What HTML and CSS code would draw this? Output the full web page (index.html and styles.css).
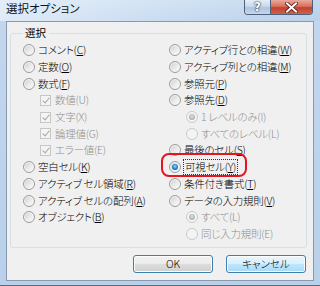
FILE: index.html
```html
<!DOCTYPE html>
<html lang="ja">
<head>
<meta charset="utf-8">
<link rel="stylesheet" href="styles.css">
</head>
<body>
<div class="window">
  <div class="titlebar">
    <span class="title">選択オプション</span>
    <div class="caption-btns">
      <span class="cbtn help">?</span>
      <span class="cbtn close">
        <svg width="13" height="11" viewBox="0 0 13 11"><path d="M2 1.5 L11 9.5 M11 1.5 L2 9.5" stroke="#5a1a14" stroke-width="3.6" stroke-linecap="square"/><path d="M2 1.5 L11 9.5 M11 1.5 L2 9.5" stroke="#ffffff" stroke-width="2" stroke-linecap="square"/></svg>
      </span>
    </div>
  </div>
  <div class="client">
    <fieldset class="group">
      <legend>選択</legend>
      <div class="cols">
        <div class="col">
          <div class="row"><span class="radio"></span><span class="lbl">コメント(<u>C</u>)</span></div>
          <div class="row"><span class="radio"></span><span class="lbl">定数(<u>O</u>)</span></div>
          <div class="row"><span class="radio"></span><span class="lbl">数式(<u>F</u>)</span></div>
          <div class="row sub dis"><span class="check"></span><span class="lbl">数値(U)</span></div>
          <div class="row sub dis"><span class="check"></span><span class="lbl">文字(X)</span></div>
          <div class="row sub dis"><span class="check"></span><span class="lbl">論理値(G)</span></div>
          <div class="row sub dis"><span class="check"></span><span class="lbl">エラー値(E)</span></div>
          <div class="row"><span class="radio"></span><span class="lbl">空白セル(<u>K</u>)</span></div>
          <div class="row"><span class="radio"></span><span class="lbl">アクティブ セル領域(<u>R</u>)</span></div>
          <div class="row"><span class="radio"></span><span class="lbl">アクティブ セルの配列(<u>A</u>)</span></div>
          <div class="row"><span class="radio"></span><span class="lbl">オブジェクト(<u>B</u>)</span></div>
        </div>
        <div class="col">
          <div class="row"><span class="radio"></span><span class="lbl">アクティブ行との相違(<u>W</u>)</span></div>
          <div class="row"><span class="radio"></span><span class="lbl">アクティブ列との相違(<u>M</u>)</span></div>
          <div class="row"><span class="radio"></span><span class="lbl">参照元(<u>P</u>)</span></div>
          <div class="row"><span class="radio"></span><span class="lbl">参照先(<u>D</u>)</span></div>
          <div class="row sub dis"><span class="radio on"></span><span class="lbl">1 レベルのみ(I)</span></div>
          <div class="row sub dis"><span class="radio"></span><span class="lbl">すべてのレベル(L)</span></div>
          <div class="row"><span class="radio"></span><span class="lbl">最後のセル(<u>S</u>)</span></div>
          <div class="row picked"><span class="radio on"></span><span class="lbl focus">可視セル(<u>Y</u>)</span><span class="mark"></span></div>
          <div class="row"><span class="radio"></span><span class="lbl">条件付き書式(<u>T</u>)</span></div>
          <div class="row"><span class="radio"></span><span class="lbl">データの入力規則(<u>V</u>)</span></div>
          <div class="row sub dis"><span class="radio on"></span><span class="lbl">すべて(L)</span></div>
          <div class="row sub dis"><span class="radio"></span><span class="lbl">同じ入力規則(E)</span></div>
        </div>
      </div>
    </fieldset>
    <div class="buttons">
      <button class="btn ok">OK</button>
      <button class="btn cancel">キャンセル</button>
    </div>
  </div>
</div>
</body>
</html>
```

FILE: styles.css
```css
* { box-sizing: border-box; }
html, body { margin: 0; padding: 0; background: #bcd3ec; }
body {
  font-family: "Noto Sans CJK JP", "Noto Sans", sans-serif;
  font-feature-settings: "palt";
  font-weight: 300;
  color: #000;
}
.window {
  width: 320px;
  height: 286px;
  background: linear-gradient(180deg, #d3e3f4 0px, #c2d7ee 21px, #b9d0ea 100%);
  border-bottom: 1px solid #5b6b80;
  overflow: hidden;
}
.titlebar {
  height: 21px;
  display: flex;
  align-items: flex-start;
  padding-left: 6px;
  background: linear-gradient(90deg, rgba(235,243,251,0.7) 0px, rgba(215,230,246,0.3) 160px, rgba(170,196,226,0.35) 320px);
}
.title {
  font-size: 11.5px;
  line-height: 17px;
  color: #111;
  font-weight: 400;
}
.caption-btns {
  margin-left: auto;
  margin-right: 7px;
  display: flex;
  height: 15px;
  border: 1px solid #4f6079;
  border-top: none;
  border-radius: 0 0 4px 4px;
  overflow: hidden;
}
.cbtn {
  height: 14px;
  display: flex;
  align-items: center;
  justify-content: center;
}
.help {
  width: 26px;
  background: linear-gradient(180deg, #e6eef8 0%, #c9d9ec 45%, #aec5df 55%, #c4d8ee 100%);
  border-right: 1px solid #4f6079;
  color: #fff;
  font-family: "DejaVu Sans", sans-serif;
  font-weight: bold;
  font-size: 12px;
  text-shadow: 0 0 2px #223, 0 0 1px #223;
}
.close {
  width: 41px;
  background: linear-gradient(180deg, #e9a99c 0%, #d7715f 45%, #c2412c 55%, #d2614b 100%);
}
.client {
  margin-left: 6px;
  width: 308px;
  height: 260px;
  background: #f0f0f0;
  border: 1px solid #8a99ab;
  padding: 4px 6px 0 3px;
}
.group {
  margin: 0;
  border: 1px solid #d5dfe5;
  border-radius: 3px;
  padding: 2px 0 4px 12px;
  height: 222px;
}
.group legend {
  font-size: 10.5px;
  line-height: 14px;
  padding: 0 3px 0 2px;
  margin-left: 0;
  font-weight: 400;
}
.cols {
  display: grid;
  grid-template-columns: 146px 1fr;
}
.col {
  display: flex;
  flex-direction: column;
}
.row {
  height: 16.7px;
  display: flex;
  align-items: center;
  gap: 3px;
  font-size: 10.5px;
  letter-spacing: -0.25px;
  line-height: 14px;
  white-space: nowrap;
  position: relative;
}
.row.sub { margin-left: 17px; }
.row.dis { color: #8e8e8e; }
.row u { text-underline-offset: 1px; }
.radio {
  width: 12px;
  height: 12px;
  flex: none;
  border-radius: 50%;
  border: 1px solid #9c9c9c;
  background: linear-gradient(135deg, #cbcbcb 0%, #e9e9e9 50%, #fdfdfd 100%);
  box-shadow: inset 0 0 0 1px #f6f6f6;
  position: relative;
}
.radio.on::after {
  content: "";
  position: absolute;
  left: 2px;
  top: 2px;
  width: 6px;
  height: 6px;
  border-radius: 50%;
  background: radial-gradient(circle at 50% 40%, #8fdcff 0%, #2a8fd6 45%, #0b3f7c 100%);
}
.dis .radio {
  border-color: #c9c9c9;
  background: #f4f4f4;
  box-shadow: none;
}
.dis .radio.on::after {
  background: radial-gradient(circle at 50% 40%, #e0e0e0 0%, #b4b4b4 60%, #9a9a9a 100%);
}
.check {
  width: 11px;
  height: 11px;
  flex: none;
  margin-right: 1px;
  border: 1px solid #c6c6c6;
  background: #f4f4f4;
  position: relative;
}
.check::after {
  content: "";
  position: absolute;
  left: 3px;
  top: 0px;
  width: 3px;
  height: 6px;
  border-right: 1.5px solid #a6a6a6;
  border-bottom: 1.5px solid #a6a6a6;
  transform: rotate(40deg);
}
.focus {
  outline: 1px dotted #333;
  outline-offset: 0px;
  padding: 0 1px;
}
.mark {
  position: absolute;
  left: -8px;
  top: -6px;
  width: 86px;
  height: 24px;
  border: 2px solid #e4151f;
  border-radius: 8px;
}
.buttons {
  display: flex;
  justify-content: flex-end;
  gap: 13px;
  margin-top: 7px;
  padding-right: 1px;
}
.btn {
  width: 80px;
  height: 18px;
  font-family: "Noto Sans CJK JP", "Noto Sans", sans-serif;
  font-feature-settings: "palt";
  font-size: 10.5px;
  font-weight: 300;
  line-height: 14px;
  padding: 0;
  color: #000;
  border-radius: 3px;
  border: 1px solid #3c7fb1;
  box-shadow: inset 0 0 0 1px #fdfdfd;
}
.ok {
  background: linear-gradient(180deg, #f2f2f2 0%, #ebebeb 48%, #dddddd 52%, #cfcfcf 100%);
}
.cancel {
  background: linear-gradient(180deg, #eaf6fd 0%, #d9f0fc 48%, #bee6fd 52%, #a7d9f5 100%);
}
```
